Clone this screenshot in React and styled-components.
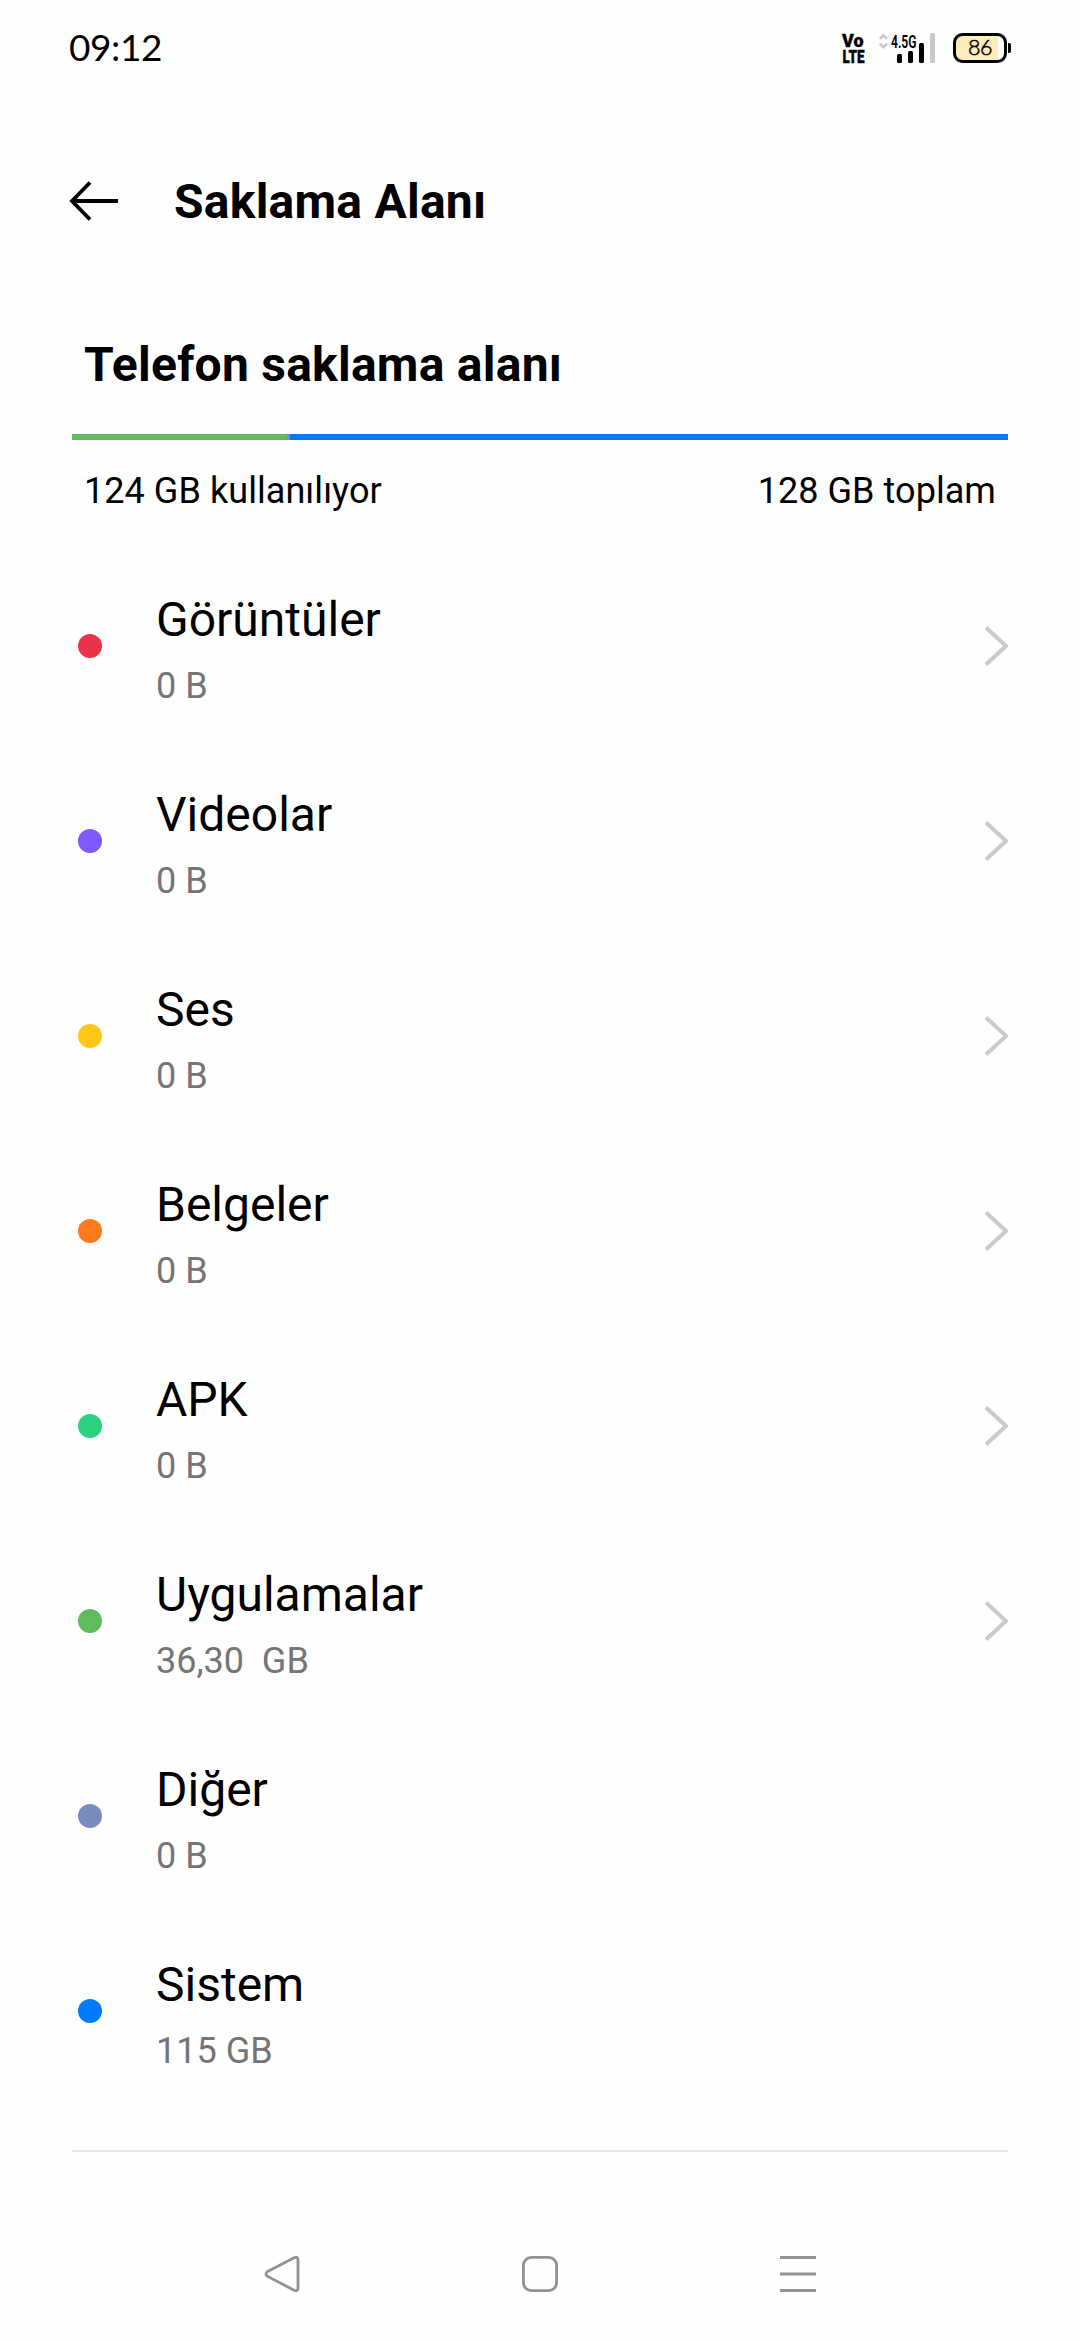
import styled, { createGlobalStyle } from "styled-components"

const GlobalStyle = createGlobalStyle`
*{
    box-sizing:border-box;
}
body{
    margin:0;
    background-color:#fefefe;
    font-family:Roboto, "Liberation Sans", sans-serif;
    color:#000;
}
`
const Container = styled.div`
width:1080px;
height:2340px;
display:flex;
flex-direction:column;
background-color:#fefefe;
`
const StatusBar = styled.div`
height:96px;
padding:0 69px;
display:flex;
align-items:center;
justify-content:space-between;
`
const Clock = styled.span`
padding-bottom:2px;
font-family:Lato, sans-serif;
font-size:37px;
line-height:44px;
letter-spacing:-0.4px;
`
const StatusIcons = styled.div`
display:flex;
align-items:center;
gap:15px;

svg{
    overflow:visible;
}
`
const Header = styled.header`
height:210px;
padding:0 69px;
display:flex;
align-items:center;
gap:55px;
`
const Title = styled.h1`
margin:0;
padding-top:1px;
font-size:48px;
font-weight:700;
line-height:56px;
letter-spacing:0.25px;
`
const Summary = styled.section`
height:238px;
padding:31px 72px 0;
`
const SummaryTitle = styled.h2`
margin:0;
padding:0 12px;
font-size:48px;
font-weight:700;
line-height:56px;
letter-spacing:0.25px;
`
const UsageBar = styled.div`
display:flex;
height:6px;
margin-top:41px;
`
const Segment = styled.div`
flex:${(props) => props.$grow || "none"};
width:${(props) => props.$width || "auto"};
background-color:${(props) => props.$color};
`
const SummaryText = styled.div`
display:flex;
justify-content:space-between;
padding:0 12px;
margin-top:30px;
font-size:36px;
line-height:42px;
letter-spacing:0.06px;
`
const List = styled.ul`
margin:0 72px;
padding:4px 0 42px;
list-style:none;
border-bottom:2px solid #e6e6e6;
`
const Row = styled.li`
display:flex;
align-items:center;
height:195px;
padding:1px 0 0 6px;
`
const Dot = styled.span`
width:24px;
height:24px;
margin-right:54px;
border-radius:50%;
background-color:${(props) => props.$color};
`
const RowText = styled.div`
flex:1;
padding-top:6px;
`
const Name = styled.div`
font-size:48px;
line-height:56px;
`
const Size = styled.div`
margin-top:17px;
font-size:36px;
line-height:42px;
color:#757575;
white-space:pre;
`
const NavBar = styled.nav`
flex:1;
display:flex;
align-items:center;
justify-content:center;
gap:220px;
padding-top:56px;
`

const items = [
  { name: "Görüntüler", size: "0 B", color: "#ea344a", link: true },
  { name: "Videolar", size: "0 B", color: "#7f58ff", link: true },
  { name: "Ses", size: "0 B", color: "#ffc617", link: true },
  { name: "Belgeler", size: "0 B", color: "#ff7a1c", link: true },
  { name: "APK", size: "0 B", color: "#2ad181", link: true },
  { name: "Uygulamalar", size: "36,30  GB", color: "#5fbb5e", link: true },
  { name: "Diğer", size: "0 B", color: "#788dbb" },
  { name: "Sistem", size: "115 GB", color: "#007aff" },
]

const VoLte = () => (
  <svg width="27" height="32" viewBox="0 0 27 32" fontFamily="Roboto" fontWeight="900" stroke="#000" strokeWidth="0.4">
    <text x="5" y="15.2" fontSize="18.5" textLength="21.5" lengthAdjust="spacingAndGlyphs">Vo</text>
    <text x="5.5" y="31" fontSize="18.5" textLength="22" lengthAdjust="spacingAndGlyphs">LTE</text>
  </svg>
)

const Signal = () => (
  <svg width="59" height="32" viewBox="0 0 59 32">
    <path d="M0.8 6.8L4.4 3.4L8 6.8M0.8 11.8L4.4 15.2L8 11.8" fill="none" stroke="#c9c9c9" strokeWidth="2.6" />
    <text x="12" y="15.7" fontSize="18" fontFamily="Roboto" fontWeight="600" textLength="25.5" lengthAdjust="spacingAndGlyphs">4.5G</text>
    <rect x="18" y="22" width="5" height="9" rx="1.5" />
    <rect x="29" y="19" width="5" height="12" rx="1.5" />
    <rect x="40" y="11" width="5" height="20" rx="1.5" />
    <rect x="51" y="1" width="5" height="30" rx="1.5" fill="#c9c9c9" />
  </svg>
)

const Battery = () => (
  <svg width="58" height="32" viewBox="0 0 58 32">
    <path d="M10 3H45V29H10Q3 29 3 22V10Q3 3 10 3Z" fill="#fdebba" />
    <rect x="1.5" y="2.5" width="51" height="27" rx="8" fill="none" stroke="#000" strokeWidth="3" />
    <path d="M55 11H56Q58 11 58 13V19Q58 21 56 21H55Z" />
    <text x="15" y="23.4" fontSize="21.5" fontFamily="Lato" fontWeight="300" textLength="24.5" stroke="#000" strokeWidth="0.5">86</text>
  </svg>
)

const Back = () => (
  <svg width="50" height="40" viewBox="0 0 50 40" fill="none" stroke="#000" strokeWidth="3.8">
    <path d="M49 20H3M21 1.5L3 20L21 38.5" />
  </svg>
)

const Chevron = () => (
  <svg width="24" height="42" viewBox="0 0 24 42" fill="none" stroke="#cbcbcb" strokeWidth="4" strokeLinejoin="round">
    <path d="M2 2.5L22 21L2 39.5" />
  </svg>
)

const App = () => {
  return (
    <Container>
      <GlobalStyle />
      <StatusBar>
        <Clock>09:12</Clock>
        <StatusIcons>
          <VoLte />
          <Signal />
          <Battery />
        </StatusIcons>
      </StatusBar>
      <Header>
        <Back />
        <Title>Saklama Alanı</Title>
      </Header>
      <Summary>
        <SummaryTitle>Telefon saklama alanı</SummaryTitle>
        <UsageBar>
          <Segment $width="215px" $color="#5fbb5e" />
          <Segment $width="3px" $color="#788dbb" />
          <Segment $grow="1" $color="#007aff" />
        </UsageBar>
        <SummaryText>
          <span>124 GB kullanılıyor</span>
          <span>128 GB toplam</span>
        </SummaryText>
      </Summary>
      <List>
        {items.map((item) => (
          <Row key={item.name}>
            <Dot $color={item.color} />
            <RowText>
              <Name>{item.name}</Name>
              <Size>{item.size}</Size>
            </RowText>
            {item.link && <Chevron />}
          </Row>
        ))}
      </List>
      <NavBar>
        <svg width="38" height="38" viewBox="0 0 38 38" fill="none" stroke="#929292" strokeWidth="2.8">
          <path d="M4.2 16.8L31 2.8Q35 1.2 35 5V33Q35 36.8 31 35.2L4.2 21.2Q1.8 19 4.2 16.8Z" />
        </svg>
        <svg width="38" height="38" viewBox="0 0 38 38" fill="none" stroke="#929292" strokeWidth="2.8">
          <rect x="2.4" y="2.4" width="33.2" height="33.2" rx="8" />
        </svg>
        <svg width="38" height="38" viewBox="0 0 38 38" stroke="#929292" strokeWidth="3">
          <path d="M1 2.5H37M1 19H37M1 35.5H37" />
        </svg>
      </NavBar>
    </Container>
  )
}

export default App
